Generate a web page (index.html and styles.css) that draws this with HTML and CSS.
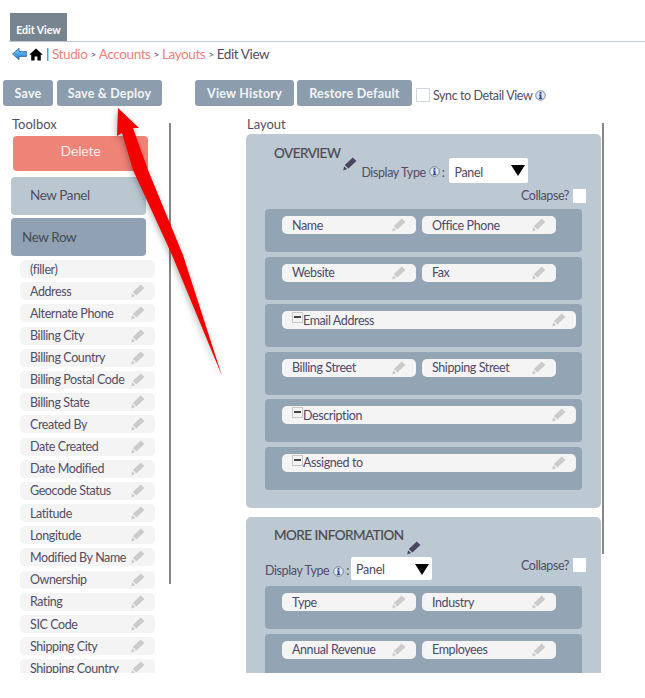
FILE: index.html
```html
<!DOCTYPE html>
<html lang="en">
<head>
<meta charset="utf-8">
<title>Edit View</title>
<link rel="stylesheet" href="styles.css">
</head>
<body>
<svg class="defs" width="0" height="0" aria-hidden="true">
  <defs>
    <symbol id="pencil" viewBox="0 0 14 14">
      <path d="M9.8 0.6 13.4 4 5.4 11.4 1.8 8Z"/>
      <path d="M1.1 9.2 4.2 12 0.2 13.6Z"/>
    </symbol>
    <symbol id="info" viewBox="0 0 12 12">
      <circle cx="6" cy="6" r="5.2" fill="#dfe7f0" stroke="#6d7f95" stroke-width="1"/>
      <rect x="5" y="2.3" width="2" height="1.8" fill="#27408f"/>
      <path d="M4.4 5H7V8.7H7.9V9.8H4.2V8.7H5.1V6H4.4Z" fill="#27408f"/>
    </symbol>
    <linearGradient id="backfill" x1="0" y1="0" x2="0" y2="1">
      <stop offset="0" stop-color="#7fd0f8"/>
      <stop offset="1" stop-color="#1f78d8"/>
    </linearGradient>
  </defs>
</svg>
<div class="page">
  <div class="tabs"><div class="tab">Edit View</div></div>
  <div class="crumbs">
    <svg class="back" viewBox="0 0 16 14"><path d="M7.5 0.8 0.6 7 7.5 13.2V9.6H15.4V4.4H7.5Z" fill="url(#backfill)" stroke="#1a4aa0" stroke-width="0.7"/></svg>
    <svg class="home" viewBox="0 0 14 13"><path d="M7 0.5 0.2 6.8H2.2V12.6H5.6V8.6H8.4V12.6H11.8V6.8H13.8Z" fill="#000"/></svg>
    <span class="sep">|</span>
    <a class="link">Studio</a><span class="gt">&gt;</span><a class="link">Accounts</a><span class="gt">&gt;</span><a class="link">Layouts</a><span class="gt">&gt;</span><span>Edit View</span>
  </div>
  <div class="toolbar">
    <button class="btn btn-save">Save</button>
    <button class="btn btn-deploy">Save &amp; Deploy</button>
    <button class="btn btn-history">View History</button>
    <button class="btn btn-restore">Restore Default</button>
    <span class="check sync-check"></span>
    <span class="sync">Sync to Detail View</span>
    <svg class="info"><use href="#info"/></svg>
  </div>
  <div class="columns">
    <section class="toolbox">
      <h2 class="heading tool-heading">Toolbox</h2>
      <div class="tool tool-delete">Delete</div>
      <div class="tool tool-panel">New Panel</div>
      <div class="tool tool-row">New Row</div>
      <div class="items">
        <div class="item">(filler)</div>
        <div class="item">Address<svg class="pen"><use href="#pencil"/></svg></div>
        <div class="item">Alternate Phone<svg class="pen"><use href="#pencil"/></svg></div>
        <div class="item">Billing City<svg class="pen"><use href="#pencil"/></svg></div>
        <div class="item">Billing Country<svg class="pen"><use href="#pencil"/></svg></div>
        <div class="item">Billing Postal Code<svg class="pen"><use href="#pencil"/></svg></div>
        <div class="item">Billing State<svg class="pen"><use href="#pencil"/></svg></div>
        <div class="item">Created By<svg class="pen"><use href="#pencil"/></svg></div>
        <div class="item">Date Created<svg class="pen"><use href="#pencil"/></svg></div>
        <div class="item">Date Modified<svg class="pen"><use href="#pencil"/></svg></div>
        <div class="item">Geocode Status<svg class="pen"><use href="#pencil"/></svg></div>
        <div class="item">Latitude<svg class="pen"><use href="#pencil"/></svg></div>
        <div class="item">Longitude<svg class="pen"><use href="#pencil"/></svg></div>
        <div class="item">Modified By Name<svg class="pen"><use href="#pencil"/></svg></div>
        <div class="item">Ownership<svg class="pen"><use href="#pencil"/></svg></div>
        <div class="item">Rating<svg class="pen"><use href="#pencil"/></svg></div>
        <div class="item">SIC Code<svg class="pen"><use href="#pencil"/></svg></div>
        <div class="item">Shipping City<svg class="pen"><use href="#pencil"/></svg></div>
        <div class="item">Shipping Country<svg class="pen"><use href="#pencil"/></svg></div>
      </div>
    </section>
    <div class="divider divider-left"></div>
    <section class="layout">
      <h2 class="heading layout-heading">Layout</h2>
      <div class="panel panel-overview">
        <div class="ov-line">
          <h3 class="panel-title">OVERVIEW</h3>
          <svg class="title-pen"><use href="#pencil"/></svg>
          <span class="label ov-label">Display Type</span>
          <svg class="info ov-info"><use href="#info"/></svg><span class="label colon">:</span>
          <div class="select select-ov">Panel<span class="caret"></span></div>
        </div>
        <div class="collapse-line">
          <span class="label">Collapse?</span><span class="check collapse-check"></span>
        </div>
        <div class="rows">
          <div class="row">
            <div class="field">Name<svg class="pen"><use href="#pencil"/></svg></div>
            <div class="field">Office Phone<svg class="pen"><use href="#pencil"/></svg></div>
          </div>
          <div class="row">
            <div class="field">Website<svg class="pen"><use href="#pencil"/></svg></div>
            <div class="field">Fax<svg class="pen"><use href="#pencil"/></svg></div>
          </div>
          <div class="row">
            <div class="field field-wide"><span class="minus"></span>Email Address<svg class="pen"><use href="#pencil"/></svg></div>
          </div>
          <div class="row">
            <div class="field">Billing Street<svg class="pen"><use href="#pencil"/></svg></div>
            <div class="field">Shipping Street<svg class="pen"><use href="#pencil"/></svg></div>
          </div>
          <div class="row">
            <div class="field field-wide"><span class="minus"></span>Description<svg class="pen"><use href="#pencil"/></svg></div>
          </div>
          <div class="row">
            <div class="field field-wide"><span class="minus"></span>Assigned to<svg class="pen"><use href="#pencil"/></svg></div>
          </div>
        </div>
      </div>
      <div class="panel panel-more">
        <div class="more-title">
          <h3 class="panel-title">MORE INFORMATION</h3>
          <svg class="title-pen more-pen"><use href="#pencil"/></svg>
        </div>
        <div class="more-line">
          <span class="label">Display Type</span>
          <svg class="info more-info"><use href="#info"/></svg><span class="label colon">:</span>
          <div class="select select-more">Panel<span class="caret"></span></div>
          <span class="label more-collapse">Collapse?</span><span class="check collapse-check more-check"></span>
        </div>
        <div class="rows">
          <div class="row">
            <div class="field">Type<svg class="pen"><use href="#pencil"/></svg></div>
            <div class="field">Industry<svg class="pen"><use href="#pencil"/></svg></div>
          </div>
          <div class="row">
            <div class="field">Annual Revenue<svg class="pen"><use href="#pencil"/></svg></div>
            <div class="field">Employees<svg class="pen"><use href="#pencil"/></svg></div>
          </div>
        </div>
      </div>
    </section>
    <div class="divider divider-right"></div>
  </div>
  <svg class="arrow" viewBox="0 0 645 698" aria-hidden="true">
    <path d="M118 108 139 128 133 128 148 170 183 255 222 376 172 255 133 170 122 133 117 136Z"/>
  </svg>
</div>
</body>
</html>
```
FILE: styles.css
```css
* { box-sizing: border-box; }
html, body { margin: 0; padding: 0; background: #fff; }
body { font-family: Lato, "Open Sans", sans-serif; color: #534d64; font-size: 13px; }
.defs { position: absolute; }
.page { position: relative; width: 645px; height: 673px; overflow: hidden; }

.tabs { margin-left: 9px; padding-left: 1px; padding-top: 13px; height: 42px; border-bottom: 1px solid #bcc8d2; }
.tab { width: 57px; height: 28px; background: #778591; color: #fff; font-size: 10.5px; font-weight: 700; display: flex; align-items: flex-end; justify-content: center; padding-bottom: 5px; }

.crumbs { display: flex; align-items: center; height: 26px; padding: 0 0 2px 12px; font-size: 13.5px; letter-spacing: -0.4px; color: #534d64; margin-bottom: 12px; }
.back { width: 15px; height: 14px; }
.home { width: 14px; height: 13px; margin-left: 2px; }
.sep { margin: 0 3px; color: #3d5a80; }
.link { color: #f08080; }
.gt { margin: 0 3px; font-size: 10px; }

.toolbar { display: flex; align-items: center; height: 26px; padding-left: 3px; }
.btn { border: 0; height: 26px; padding: 0; background: #8c9eae; color: #f2f4f6; border-radius: 3px; font-family: Lato, sans-serif; font-size: 12.5px; font-weight: 700; letter-spacing: 0.2px; }
.btn-save { width: 50px; }
.btn-deploy { width: 105px; margin-left: 4px; }
.btn-history { width: 99px; margin-left: 33px; }
.btn-restore { width: 115px; margin-left: 3px; }
.check { display: block; background: #fff; }
.sync-check { width: 14px; height: 14px; border: 1px solid #cfd6dd; margin-left: 4px; margin-top: 3px; }
.sync { margin-left: 3px; font-size: 12.5px; letter-spacing: -0.4px; margin-top: 4px; }
.info { width: 11px; height: 11px; margin-left: 3px; margin-top: 4px; }

.columns { display: flex; padding-top: 10px; align-items: flex-start; }
.heading { margin: 0; font-size: 13px; font-weight: 400; line-height: 16px; color: #534d64; }

.toolbox { width: 169px; flex: none; }
.tool-heading { margin-left: 12px; margin-bottom: 4px; }
.tool { border-radius: 4px; font-size: 14px; display: flex; }
.tool-delete { margin-left: 13px; width: 135px; height: 35px; background: #f08378; color: #fbeeea; justify-content: center; padding-top: 6px; letter-spacing: -0.2px; }
.tool-panel { margin: 6px 0 0 11px; width: 135px; height: 38px; background: #bac7d1; color: #534f5a; padding: 10px 0 0 19px; font-size: 13.5px; letter-spacing: -0.4px; }
.tool-row { margin: 3px 0 0 11px; width: 135px; height: 38px; background: #8fa1b2; color: #4a4a54; padding: 11px 0 0 11px; font-size: 13.5px; letter-spacing: -0.4px; }

.items { margin: 4px 0 0 20px; width: 135px; display: flex; flex-direction: column; gap: 4.2px; }
.item { height: 18px; flex: none; background: #f4f4f4; border-radius: 5px; padding: 0 10px; display: flex; align-items: center; justify-content: space-between; font-size: 12.5px; letter-spacing: -0.4px; white-space: nowrap; }

.pen { width: 14px; height: 14px; fill: #cbcbcb; flex: none; }

.divider { width: 2px; flex: none; background: #888; margin-top: 7px; }
.divider-left { height: 461px; }
.divider-right { height: 431px; margin-left: 1px; }

.layout { width: 355px; margin-left: 75px; flex: none; }
.layout-heading { margin-left: 1px; margin-bottom: 2px; }
.panel { background: #bcc8d2; border-radius: 5px; padding: 0 19px; }
.panel-overview { height: 374px; }
.panel-more { height: 170px; margin-top: 9px; border-radius: 5px 5px 0 0; }

.panel-title { margin: 0; font-size: 13.5px; font-weight: 400; color: #4c4a52; line-height: 18px; white-space: nowrap; letter-spacing: -0.5px; -webkit-text-stroke: 0.2px #4c4a52; }
.ov-line { display: flex; align-items: flex-start; height: 49px; padding: 10px 0 0 9px; }
.title-pen { width: 14px; height: 14px; fill: #4a4560; flex: none; margin: 13px 0 0 3px; }
.ov-line .label { margin-top: 21px; }
.ov-label { margin-left: 4px; }
.ov-info { margin: 22px 0 0 3px; }
.label { font-size: 12.5px; color: #534d64; line-height: 16px; white-space: nowrap; letter-spacing: -0.4px; }
.colon { margin-left: 2px; }
.select { background: #fff; border-radius: 2px; font-size: 12.5px; letter-spacing: -0.3px; color: #4c4a60; position: relative; display: flex; align-items: center; padding: 3px 0 0 5px; flex: none; }
.select-ov { width: 79px; height: 25px; margin: 14px 0 0 5px; }
.select-more { width: 81px; height: 23px; margin: -2px 0 0 2px; padding-top: 3px; }
.caret { position: absolute; right: 3px; top: 7px; width: 0; height: 0; border-left: 7px solid transparent; border-right: 7px solid transparent; border-top: 11px solid #000; }

.collapse-line { display: flex; align-items: center; justify-content: flex-end; height: 26px; margin-right: -4px; }
.collapse-check { width: 13px; height: 14px; margin-left: 4px; }

.rows { display: flex; flex-direction: column; gap: 4.5px; width: 317px; }
.row { flex: none; height: 43px; background: #93a4b4; border-radius: 4px; padding: 7px 0 0 17px; display: flex; gap: 6px; align-items: flex-start; }
.field { width: 134px; height: 18px; background: #f4f4f4; border-radius: 5px; padding: 0 10px; display: flex; align-items: center; justify-content: space-between; font-size: 12.5px; letter-spacing: -0.4px; color: #4c4a68; }
.field-wide { width: 294px; justify-content: flex-start; position: relative; }
.field-wide .pen { margin-left: auto; }
.minus { width: 11px; height: 11px; border: 1px solid #c8c8c8; background: #f4f4f4; display: block; position: relative; margin-top: -5px; flex: none; }
.minus::after { content: ""; position: absolute; left: 1px; right: 1px; top: 3px; height: 2px; background: #444; }

.more-title { display: flex; align-items: flex-start; height: 39px; padding: 9px 0 0 9px; }
.more-pen { margin: 15px 0 0 3px; }
.more-line { display: flex; align-items: center; height: 30px; width: 321px; padding-bottom: 4px; }
.more-info { margin: 4px 0 0 4px; }
.more-line > .label:first-child { margin-top: 3px; }
.more-line .colon { margin-top: 3px; }
.more-collapse { margin-left: auto; margin-top: -6px; }
.more-check { margin-top: -8px; }

.arrow { position: absolute; left: 0; top: 0; width: 645px; height: 698px; fill: #f50000; filter: drop-shadow(-1px 2px 3px rgba(0, 0, 0, 0.3)); pointer-events: none; }
```
